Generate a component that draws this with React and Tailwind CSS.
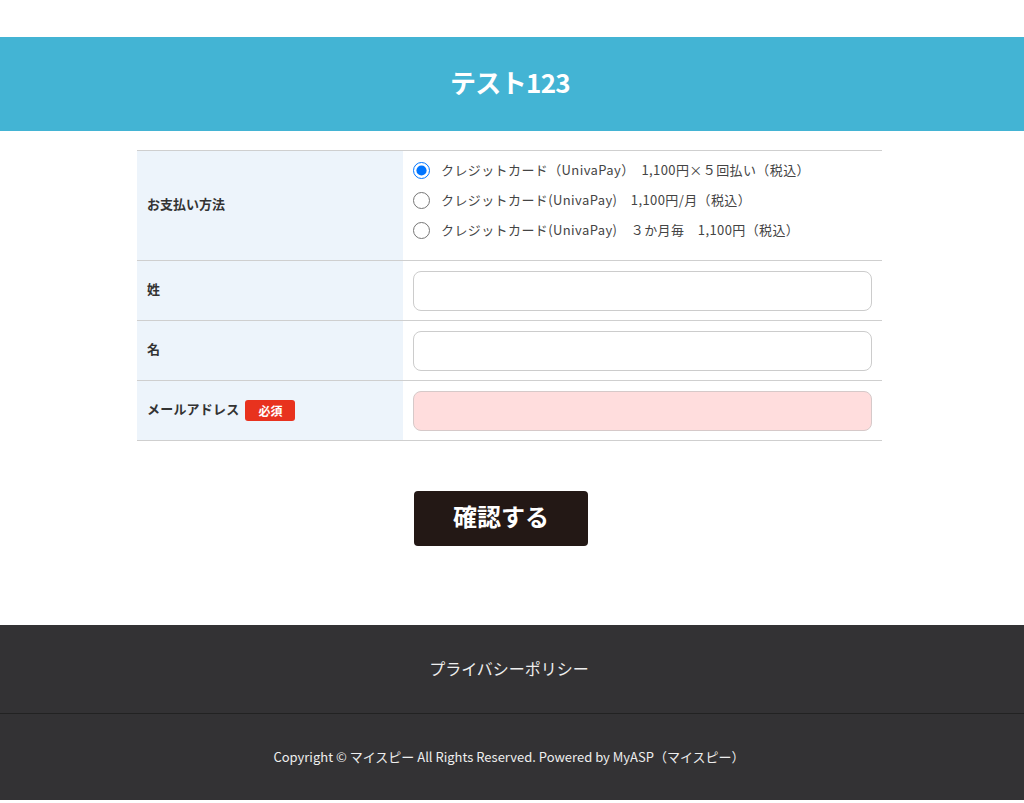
import React, { useState } from "react";

const plans = [
  "クレジットカード（UnivaPay）　1,100円×５回払い（税込）",
  "クレジットカード(UnivaPay)　1,100円/月（税込）",
  "クレジットカード(UnivaPay)　３か月毎　1,100円（税込）",
];

export default function App() {
  const [plan, setPlan] = useState(0);
  const [form, setForm] = useState({ sei: "", mei: "", email: "" });

  const font = { fontFamily: '"Noto Sans CJK JP", "Noto Sans", sans-serif' };

  return (
    <div className="min-h-[803px] bg-white text-[#333]" style={font}>
      <div className="h-[37px]" />

      {/* Header */}
      <header className="h-[94px] bg-[#43b4d4] flex items-center justify-center pb-[5px]">
        <h1 className="text-[26px] font-bold text-white tracking-tight pr-[4px]">テスト123</h1>
      </header>

      {/* Form */}
      <form className="pt-[19px]" onSubmit={(e) => e.preventDefault()}>
        <div className="w-[745px] ml-[137px] border-t border-[#cfcfcf]">
          <div className="flex border-b border-[#cfcfcf] h-[110px]">
            <div className="w-[266px] bg-[#edf4fb] flex items-center pl-[10px] pb-[3px] text-[13px] font-bold">
              お支払い方法
            </div>
            <div className="flex-1 pl-[10px] pt-[4px]">
              {plans.map((p, i) => (
                <label key={i} className="flex items-center h-[30px] gap-[11px] text-[13px] text-[#444] cursor-pointer">
                  <input
                    type="radio"
                    name="plan"
                    checked={plan === i}
                    onChange={() => setPlan(i)}
                    className="w-[17px] h-[17px] m-0 accent-[#0075ff]"
                  />
                  <span className="tracking-[0.4px]">{p}</span>
                </label>
              ))}
            </div>
          </div>

          <div className="flex border-b border-[#cfcfcf] h-[60px]">
            <div className="w-[266px] bg-[#edf4fb] flex items-center pl-[10px] pb-[3px] text-[13px] font-bold">姓</div>
            <div className="flex-1 flex items-center px-[10px]">
              <input
                value={form.sei}
                onChange={(e) => setForm({ ...form, sei: e.target.value })}
                className="w-full h-[40px] border border-[#cccccc] rounded-lg bg-white px-3 text-sm outline-none"
              />
            </div>
          </div>

          <div className="flex border-b border-[#cfcfcf] h-[60px]">
            <div className="w-[266px] bg-[#edf4fb] flex items-center pl-[10px] pb-[3px] text-[13px] font-bold">名</div>
            <div className="flex-1 flex items-center px-[10px]">
              <input
                value={form.mei}
                onChange={(e) => setForm({ ...form, mei: e.target.value })}
                className="w-full h-[40px] border border-[#cccccc] rounded-lg bg-white px-3 text-sm outline-none"
              />
            </div>
          </div>

          <div className="flex border-b border-[#cfcfcf] h-[60px]">
            <div className="w-[266px] bg-[#edf4fb] flex items-center pl-[10px] gap-[6px] text-[13px] font-bold">
              <span className="pb-[3px] tracking-[0.2px]">メールアドレス</span>
              <span className="bg-[#e8321e] text-white text-[12px] font-bold rounded-[3px] w-[50px] h-[21px] flex items-center justify-center">
                必須
              </span>
            </div>
            <div className="flex-1 flex items-center px-[10px]">
              <input
                type="email"
                value={form.email}
                onChange={(e) => setForm({ ...form, email: e.target.value })}
                className="w-full h-[40px] border border-[#d6c9c9] rounded-lg bg-[#ffdddd] px-3 text-sm outline-none"
              />
            </div>
          </div>
        </div>

        <div className="flex justify-center pr-[22px] pt-[50px] pb-[79px]">
          <button
            type="submit"
            className="w-[174px] h-[55px] bg-[#231815] text-white text-[24px] font-bold rounded-[4px] pb-[5px]"
          >
            確認する
          </button>
        </div>
      </form>

      {/* Footer */}
      <footer className="bg-[#333234] text-[#eeeeee]">
        <div className="h-[89px] flex items-center justify-center border-b border-[#222222]">
          <a href="#" className="text-[16px] pr-[6px] pb-[2px]">プライバシーポリシー</a>
        </div>
        <div className="h-[86px] flex items-center justify-center text-[13px] pr-[6px]">
          Copyright © マイスピー All Rights Reserved. Powered by MyASP（マイスピー）
        </div>
      </footer>
    </div>
  );
}
